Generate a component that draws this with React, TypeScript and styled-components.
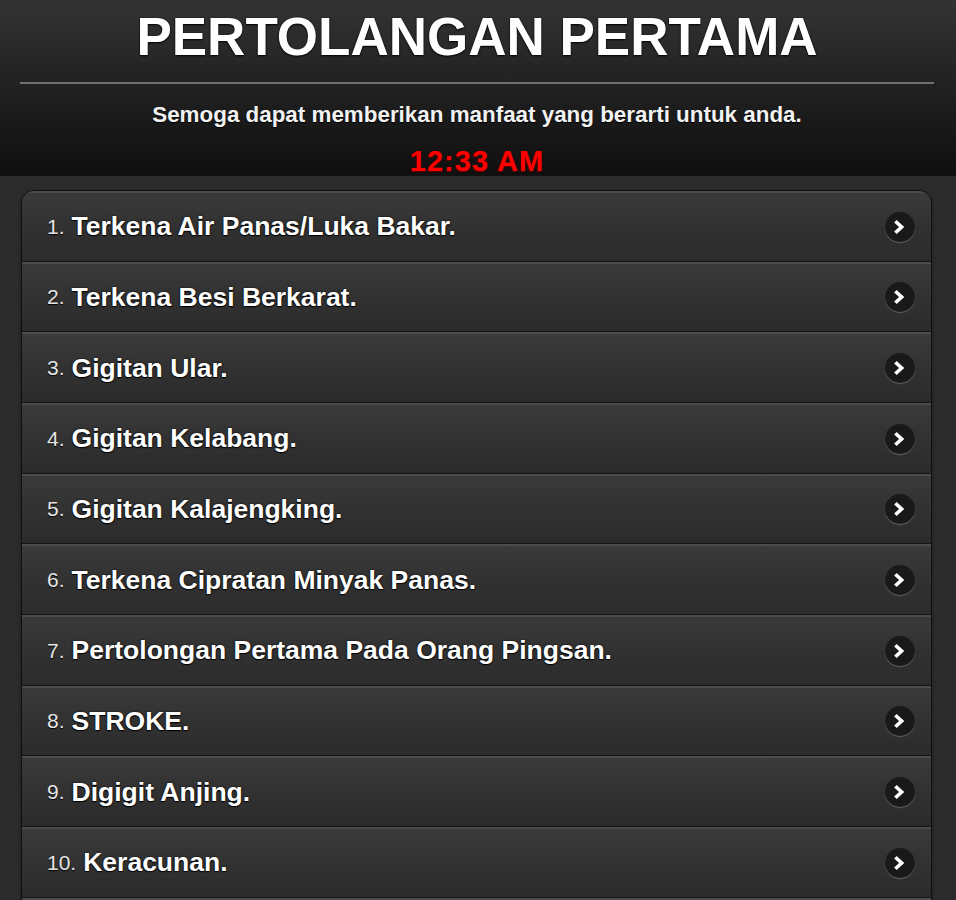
import styled, { createGlobalStyle } from 'styled-components';

const GlobalStyle = createGlobalStyle`
    html, body {
        margin: 0;
        padding: 0;
        background: #2b2b2b;
        font-family: "Liberation Sans", Arial, Helvetica, sans-serif;
    }
`;

const topics = [
    "Terkena Air Panas/Luka Bakar.",
    "Terkena Besi Berkarat.",
    "Gigitan Ular.",
    "Gigitan Kelabang.",
    "Gigitan Kalajengking.",
    "Terkena Cipratan Minyak Panas.",
    "Pertolongan Pertama Pada Orang Pingsan.",
    "STROKE.",
    "Digigit Anjing.",
    "Keracunan.",
];

function ArrowIcon() {
    return (
        <IconCircle>
            <svg width="18" height="18" viewBox="0 0 16 16">
                <path d="M5 1.8 L11.8 8 L5 14.2 L2.8 12 L7.2 8 L2.8 4 Z" fill="#fff" />
            </svg>
        </IconCircle>
    );
}

function App() {
    return (
        <Page>
            <GlobalStyle />
            <Header>
                <Title>PERTOLANGAN PERTAMA</Title>
                <Divider />
                <Subtitle>Semoga dapat memberikan manfaat yang berarti untuk anda.</Subtitle>
                <Clock>12:33 AM</Clock>
            </Header>
            <Content>
                <List>
                    {topics.map((topic, i) => (
                        <Item key={topic}>
                            <Number>{i + 1}.</Number>
                            <Label>{topic}</Label>
                            <ArrowIcon />
                        </Item>
                    ))}
                    <Item />
                </List>
            </Content>
        </Page>
    );
}

const Page = styled.div`
    width: 956px;
    height: 900px;
    overflow: hidden;
    background: #2b2b2b;
`;

const Header = styled.header`
    display: flex;
    flex-direction: column;
    align-items: center;
    padding: 7px 22px 0 20px;
    background: linear-gradient(to bottom, #333 0%, #1f1f1f 55%, #0f0f0f 100%);
    border-bottom: 1px solid #111;
`;

const Title = styled.h1`
    margin: 0;
    font-size: 53px;
    line-height: 60px;
    font-weight: bold;
    color: #fff;
    text-shadow: 0 1px 2px #000, 0 0 1px #000;
`;

const Divider = styled.div`
    align-self: stretch;
    flex-shrink: 0;
    margin-top: 15px;
    height: 2px;
    background: #707070;
`;

const Subtitle = styled.p`
    margin: 18px 0 0;
    font-size: 22.4px;
    line-height: 26px;
    font-weight: bold;
    color: #f2f2f2;
    text-shadow: 0 1px 1px #000;
`;

const Clock = styled.div`
    margin-top: 19px;
    font-size: 29px;
    line-height: 28px;
    font-weight: bold;
    letter-spacing: 1px;
    color: #f00;
    text-shadow: 0 1px 2px #600;
`;

const Content = styled.main`
    padding: 14px 24px 0 21px;
`;

const List = styled.ul`
    list-style: none;
    margin: 0;
    padding: 0;
    border-radius: 13px;
    overflow: hidden;
    border: 1px solid #111;
    box-shadow: 0 1px 3px rgba(0, 0, 0, 0.4);
`;

const Item = styled.li`
    display: flex;
    align-items: center;
    box-sizing: border-box;
    height: 70.67px;
    padding: 0 16px 0 25px;
    background: linear-gradient(to bottom, #3a3a3a 0%, #333 40%, #2b2b2b 100%);
    border-top: 2px solid #4c4c4c;
    border-bottom: 1px solid #141414;
`;

const Number = styled.span`
    font-size: 21px;
    color: #e6e6e6;
    margin-right: 7px;
    text-shadow: 0 1px 1px #000;
`;

const Label = styled.span`
    flex: 1;
    font-size: 26.5px;
    font-weight: bold;
    color: #fff;
    text-shadow: 0 1px 1px #000, 0 0 2px #000;
`;

const IconCircle = styled.span`
    display: flex;
    align-items: center;
    justify-content: center;
    width: 30px;
    height: 30px;
    border-radius: 50%;
    background: #191919;
    box-shadow: 0 1px 1px rgba(255, 255, 255, 0.25);
`;

export default App;
